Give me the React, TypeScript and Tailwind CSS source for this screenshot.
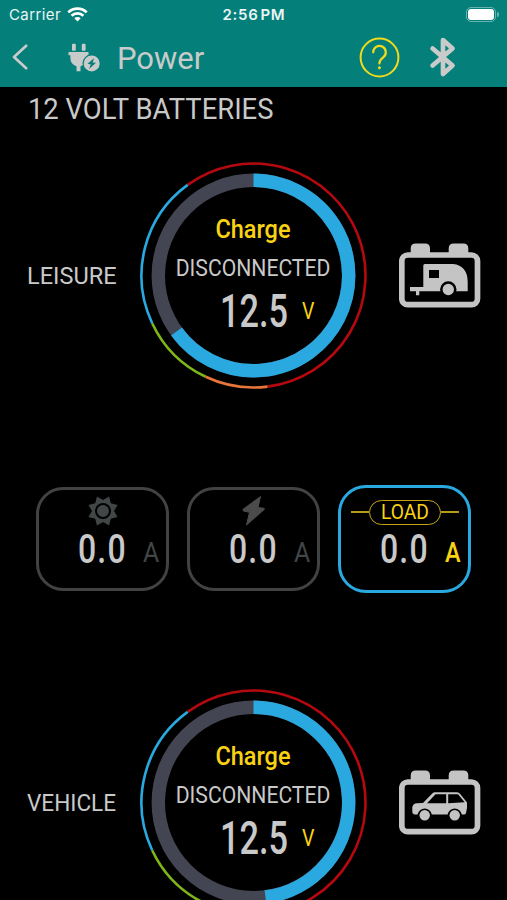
import type { ReactNode } from "react";

// ARC HELPERS
const polar = (r: number, deg: number) => {
  const a = ((deg - 90) * Math.PI) / 180;
  return `${(113.5 + r * Math.cos(a)).toFixed(2)} ${(113.5 + r * Math.sin(a)).toFixed(2)}`;
};

const arc = (r: number, from: number, to: number) =>
  `M${polar(r, from)} A${r} ${r} 0 ${to - from > 180 ? 1 : 0} 1 ${polar(r, to)}`;

const scale = [
  { from: -36, to: 172.8, color: "#b5090f" },
  { from: 172.8, to: 205.3, color: "#e8753a" },
  { from: 205.3, to: 244.8, color: "#7fb718" },
  { from: 244.8, to: 324, color: "#29a9df" },
];

// STATUS BAR
function StatusBar() {
  return (
    <div className="grid h-[28px] grid-cols-3 items-center pr-2 pl-[9px] font-[Inter] text-[15px] leading-none text-[#eaf6f5]">
      <div className="flex items-center gap-[6px]">
        <span className="tracking-[0.4px]">Carrier</span>
        <svg width="21" height="15" viewBox="0 0 21 15" fill="none" stroke="white" strokeWidth="2.7">
          <path d="M1.3 5.4a13 13 0 0 1 18.4 0" />
          <path d="M4.6 8.7a8.4 8.4 0 0 1 11.8 0" />
          <path d="M10.5 14.6 7.3 11.3a4.6 4.6 0 0 1 6.4 0Z" fill="white" stroke="none" />
        </svg>
      </div>
      <div className="pt-px text-center font-semibold tracking-[0.7px] whitespace-nowrap">2:56&#8202;PM</div>
      <div className="flex items-center justify-end gap-px">
        <div className="h-[15px] w-[30px] rounded-[5px] border border-white/40 p-px">
          <div className="h-full rounded-[3px] bg-white" />
        </div>
        <div className="h-[5px] w-[2px] rounded-r bg-white/40" />
      </div>
    </div>
  );
}

// NAV BAR
function NavBar() {
  return (
    <div className="flex h-[58px] items-center pl-[12px] text-[#c9cbcb]">
      <svg width="16" height="26" viewBox="0 0 16 26" fill="none" stroke="currentColor" strokeWidth="2.7" strokeLinecap="round" strokeLinejoin="round">
        <path d="M14.2 1.8 2 13l12.2 11.2" />
      </svg>
      <svg className="ml-10" width="32" height="29" viewBox="0 0 32 29" fill="currentColor">
        <rect x="4" y="0.8" width="3.8" height="7" rx="1" />
        <rect x="13.800" y="0.8" width="3.8" height="7" rx="1" />
        <path d="M.5 9h20v3.300h-1.500v3q0 6-6.500 8v5H8.500v-5Q2.400 21.300 2.400 15.300v-3H.5Z" />
        <circle cx="23.700" cy="20.400" r="9.200" fill="#047f7a" />
        <path fillRule="evenodd" d="M23.700 12.400a8 8 0 1 0 0 16 8 8 0 0 0 0-16ZM26.200 14.900l-1.600 4.500 3.400.3-7 6.200 1.800-4.700-3.400-.3Z" />
      </svg>
      <div className="ml-[17px] w-[90px] pt-[2px] font-[Roboto] text-[31px] leading-none">Power</div>
      <svg className="ml-[152px]" width="41" height="41" viewBox="0 0 41 41" fill="none" stroke="#f1dc1c">
        <circle cx="20.500" cy="20.500" r="18.900" strokeWidth="2" />
        <path d="M14.200 15.300a6.300 6.300 0 1 1 10.200 4.900c-2.300 1.800-4 3.300-4 6.200" strokeWidth="2.200" strokeLinecap="round" />
        <circle cx="20.400" cy="30.800" r="1.500" fill="#f1dc1c" stroke="none" />
      </svg>
      <svg className="ml-[29px]" width="28" height="42" viewBox="0 0 28 42" fill="none" stroke="currentColor" strokeWidth="4.700" strokeLinecap="round" strokeLinejoin="round">
        <path d="M3.600 12.500 23.500 29.500 14 38V4l9.500 8.500L3.600 29.500" />
      </svg>
    </div>
  );
}

// ROUND GAUGE
function Gauge({ percent, volts }: { percent: number; volts: string }) {
  return (
    <div className="relative h-[227px] w-[227px] shrink-0">
      <svg width="227" height="227" viewBox="0 0 227 227" fill="none">
        <circle cx="113.500" cy="113.500" r="95.200" stroke="#444552" strokeWidth="13.400" />
        <path d={arc(95.2, 0, percent * 3.6)} stroke="#29a9df" strokeWidth="13.400" />
        {scale.map((s) => (
          <path key={s.color} d={arc(112, s.from, s.to)} stroke={s.color} strokeWidth="2.600" />
        ))}
      </svg>
      <div className="absolute inset-0 flex flex-col items-center pt-[50px] whitespace-nowrap text-[#c9c9c9]">
        <div className="scale-x-[0.94] pr-[2px] text-[25px] leading-[36px] font-medium text-[#f9d313]">Charge</div>
        <div className="scale-x-[0.9] pr-[2px] text-[23.500px] leading-[41px]">DISCONNECTED</div>
        <div className="flex h-[44px] w-full items-center pl-[80px] leading-none">
          <span className="w-[82px] origin-left scale-x-[0.745] text-[46px] font-medium">{volts}</span>
          <span className="origin-left scale-x-[0.85] text-[23px] text-[#f9d313]">V</span>
        </div>
      </div>
    </div>
  );
}

// BATTERY OUTLINE
function Battery({ children }: { children: ReactNode }) {
  return (
    <svg className="ml-[32px] shrink-0" width="82" height="65" viewBox="0 0 82 65" fill="#c4c4c4">
      <path d="M11.700 11V5.500Q11.700.5 16.700.5H26Q31 .5 31 5.500V11ZM49.700 11V5.500Q49.700.5 54.700.5H64.300Q69.300.5 69.300 5.500V11Z" />
      <rect x="2.800" y="12" width="75.700" height="49.700" rx="6" fill="none" stroke="#c4c4c4" strokeWidth="5.700" />
      {children}
    </svg>
  );
}

function Caravan() {
  return (
    <g>
      <path d="M24.300 22.500q0-1.500 1.500-1.500H54q14.500 1.500 14.700 18V48.200H20.300v4h-3.300V48.200H11V44h13.300Z" />
      <rect x="30" y="27" width="10" height="8" fill="black" />
      <circle cx="49.300" cy="46.500" r="8.200" fill="black" />
      <circle cx="49.300" cy="46.500" r="5.700" />
    </g>
  );
}

function Car() {
  return (
    <g>
      <path fillRule="evenodd" d="M13.300 37q1-3.500 4.400-3.700L24 33l9-9.300q1.300-1.400 3-1.400H58q2 0 3 1.500L68 32.500v5.500l-1 5q-.4 1.500-2 1.500h-2.200a7.200 7.200 0 0 0-14.200 0H32.800a7.200 7.200 0 0 0-14.200 0H16q-2.700-.3-2.700-3ZM36.500 24.300 28 33.300H47.200V24.300ZM49.200 24.300V33.300l16.500-1L59 24.300Z" />
      <circle cx="25.700" cy="45.300" r="5.200" />
      <circle cx="55.700" cy="45.300" r="5.200" />
    </g>
  );
}

function BatteryRow({ label, percent, volts, children }: { label: ReactNode; percent: number; volts: string; children: ReactNode }) {
  return (
    <div className="flex h-[227px] items-center">
      <div className="w-[140px] shrink-0 pt-px pl-[27px] text-[24px] leading-none text-[#c9c9c9]">{label}</div>
      <Gauge percent={percent} volts={volts} />
      <Battery>{children}</Battery>
    </div>
  );
}

// CURRENT CARDS
function Card({ active, children }: { active?: boolean; children: ReactNode }) {
  return (
    <div
      className={
        active
          ? "flex h-[108px] w-[133px] flex-col items-center rounded-[28px] border-[3px] border-[#29a9df] pt-[6px]"
          : "flex h-[104px] w-[133px] flex-col items-center rounded-[27px] border-[3px] border-[#414242] pt-[3px]"
      }
    >
      <div className="flex h-[36px] w-full items-center justify-center">{children}</div>
      <div className={active ? "flex h-[38px] w-full items-center pl-[39px] leading-none" : "flex h-[40px] w-full items-center pl-[39px] leading-none"}>
        <span className="w-[65px] origin-left scale-x-[0.78] text-[41px] font-medium tracking-[1.500px] text-[#c9c9c9]">0.0</span>
        <span className={active ? "origin-left scale-x-[0.87] pt-[8px] text-[27px] font-medium text-[#f9d313]" : "origin-left scale-x-[0.92] pt-[8px] text-[27px] text-[#414646]"}>A</span>
      </div>
    </div>
  );
}

const star = Array.from({ length: 16 }, (_, i) => {
  const r = i % 2 ? 15.8 : 11;
  const a = (i * 22.5 * Math.PI) / 180;
  return `${(16 + r * Math.cos(a)).toFixed(2)},${(16 + r * Math.sin(a)).toFixed(2)}`;
}).join(" ");

export default function App() {
  return (
    <div className="h-screen w-full overflow-hidden bg-black font-[Roboto,sans-serif]">
      <header className="h-[87px] bg-[#047f7a]">
        <StatusBar />
        <NavBar />
      </header>

      <h1 className="h-[43px] origin-left scale-x-[0.93] pl-[30px] text-[29.500px] leading-[45px] whitespace-nowrap text-[#c9c9c9]">
        12 VOLT BATTERIES
      </h1>

      <main className="flex flex-col gap-24 pt-8">
        <BatteryRow label={<span className="inline-block origin-left scale-x-[0.98]">LEISURE</span>} percent={65} volts="12.5">
          <Caravan />
        </BatteryRow>

        <div className="flex h-[108px] items-center gap-[18px] pl-[36px]">
          <Card>
            <svg width="32" height="32" viewBox="0 0 32 32">
              <polygon points={star} fill="#414646" />
              <circle cx="16" cy="16" r="7" fill="#414646" stroke="black" strokeWidth="2" />
            </svg>
          </Card>
          <Card>
            <svg width="26" height="32" viewBox="0 0 26 32" fill="#4b4b4b" stroke="#4b4b4b" strokeLinejoin="round">
              <path d="M19.500 1.500 1.800 14.500 2.500 16l6 1.300L5.500 30 23.500 14.300 23 13.300l-6-.8Z" />
            </svg>
          </Card>
          <Card active>
            <div className="h-[1.500px] w-[18px] bg-[#b89b16]" />
            <div className="flex h-[25px] w-[72px] items-center justify-center rounded-full border-[1.500px] border-[#c5a615] text-[20px] leading-none text-[#f9d313]">
              <span className="scale-x-[0.96]">LOAD</span>
            </div>
            <div className="h-[1.500px] w-[18px] bg-[#b89b16]" />
          </Card>
        </div>

        <BatteryRow label={<span className="inline-block origin-left scale-x-[0.94]">VEHICLE</span>} percent={48} volts="12.5">
          <Car />
        </BatteryRow>
      </main>
    </div>
  );
}
